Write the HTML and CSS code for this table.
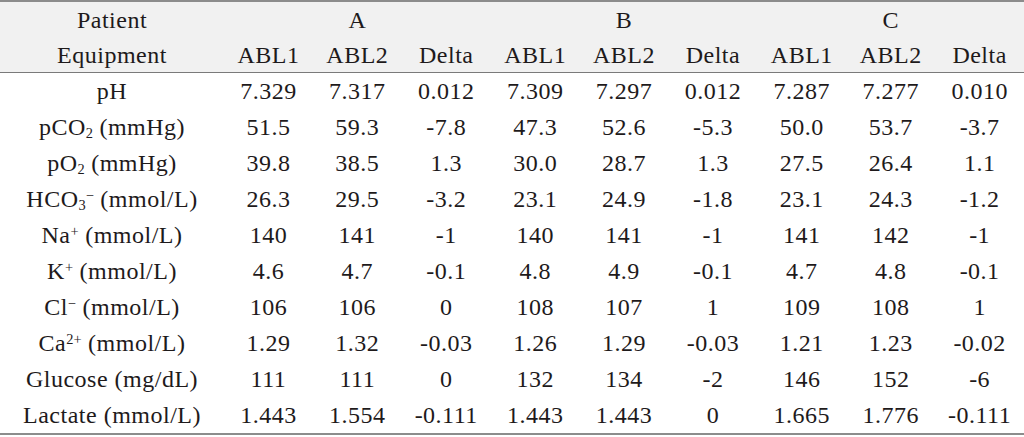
FILE: index.html
```html
<!DOCTYPE html>
<html>
<head>
<meta charset="utf-8">
<link rel="stylesheet" href="styles.css">
</head>
<body>
<table class="data">
  <colgroup>
    <col class="c-label">
    <col span="9" class="c-val">
  </colgroup>
  <thead>
    <tr class="h1">
      <th>Patient</th>
      <th colspan="3">A</th>
      <th colspan="3">B</th>
      <th colspan="3">C</th>
    </tr>
    <tr class="h2">
      <th>Equipment</th>
      <th>ABL1</th><th>ABL2</th><th>Delta</th>
      <th>ABL1</th><th>ABL2</th><th>Delta</th>
      <th>ABL1</th><th>ABL2</th><th>Delta</th>
    </tr>
  </thead>
  <tbody>
    <tr><td>pH</td><td>7.329</td><td>7.317</td><td>0.012</td><td>7.309</td><td>7.297</td><td>0.012</td><td>7.287</td><td>7.277</td><td>0.010</td></tr>
    <tr><td>pCO<sub>2</sub> (mmHg)</td><td>51.5</td><td>59.3</td><td>-7.8</td><td>47.3</td><td>52.6</td><td>-5.3</td><td>50.0</td><td>53.7</td><td>-3.7</td></tr>
    <tr><td>pO<sub>2</sub> (mmHg)</td><td>39.8</td><td>38.5</td><td>1.3</td><td>30.0</td><td>28.7</td><td>1.3</td><td>27.5</td><td>26.4</td><td>1.1</td></tr>
    <tr><td>HCO<sub>3</sub><sup>−</sup> (mmol/L)</td><td>26.3</td><td>29.5</td><td>-3.2</td><td>23.1</td><td>24.9</td><td>-1.8</td><td>23.1</td><td>24.3</td><td>-1.2</td></tr>
    <tr><td>Na<sup>+</sup> (mmol/L)</td><td>140</td><td>141</td><td>-1</td><td>140</td><td>141</td><td>-1</td><td>141</td><td>142</td><td>-1</td></tr>
    <tr><td>K<sup>+</sup> (mmol/L)</td><td>4.6</td><td>4.7</td><td>-0.1</td><td>4.8</td><td>4.9</td><td>-0.1</td><td>4.7</td><td>4.8</td><td>-0.1</td></tr>
    <tr><td>Cl<sup>−</sup> (mmol/L)</td><td>106</td><td>106</td><td>0</td><td>108</td><td>107</td><td>1</td><td>109</td><td>108</td><td>1</td></tr>
    <tr><td>Ca<sup>2+</sup> (mmol/L)</td><td>1.29</td><td>1.32</td><td>-0.03</td><td>1.26</td><td>1.29</td><td>-0.03</td><td>1.21</td><td>1.23</td><td>-0.02</td></tr>
    <tr><td>Glucose (mg/dL)</td><td>111</td><td>111</td><td>0</td><td>132</td><td>134</td><td>-2</td><td>146</td><td>152</td><td>-6</td></tr>
    <tr><td>Lactate (mmol/L)</td><td>1.443</td><td>1.554</td><td>-0.111</td><td>1.443</td><td>1.443</td><td>0</td><td>1.665</td><td>1.776</td><td>-0.111</td></tr>
  </tbody>
</table>
</body>
</html>
```

FILE: styles.css
```css
html, body {
  margin: 0;
  padding: 0;
  background: #ffffff;
}

.data {
  width: 1024px;
  table-layout: fixed;
  border-collapse: collapse;
  font-family: "Liberation Serif", "DejaVu Serif", serif;
  font-size: 24px;
  letter-spacing: 0.5px;
  color: #1e1a1b;
  border-top: 2px solid #8c8c8c;
  border-bottom: 2px solid #8c8c8c;
}

.c-label { width: 224px; }
.c-val { width: 88.9px; }

.data th,
.data td {
  padding: 0;
  text-align: center;
  font-weight: normal;
  white-space: nowrap;
  line-height: 1;
}

.data thead th {
  background: #f1f1f1;
  height: 35px;
}

.data thead tr.h2 th {
  border-bottom: 1px solid #7a7a7a;
}

.data tbody td {
  height: 36px;
}

.data sub,
.data sup {
  font-size: 0.6em;
  line-height: 0;
  letter-spacing: 0;
  position: relative;
  vertical-align: baseline;
}

.data sub { top: 0.2em; }
.data sup { top: -0.5em; }
```
